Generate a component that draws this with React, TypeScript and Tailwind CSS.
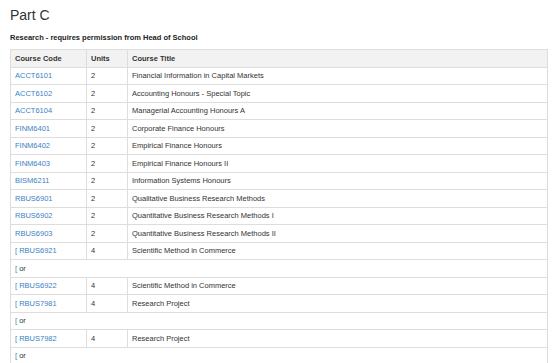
type Course = { code: string; units: number; title: string; bracket?: boolean };

type Row = Course | "or";

const rows: Row[] = [
  { code: "ACCT6101", units: 2, title: "Financial Information in Capital Markets" },
  { code: "ACCT6102", units: 2, title: "Accounting Honours - Special Topic" },
  { code: "ACCT6104", units: 2, title: "Managerial Accounting Honours A" },
  { code: "FINM6401", units: 2, title: "Corporate Finance Honours" },
  { code: "FINM6402", units: 2, title: "Empirical Finance Honours" },
  { code: "FINM6403", units: 2, title: "Empirical Finance Honours II" },
  { code: "BISM6211", units: 2, title: "Information Systems Honours" },
  { code: "RBUS6901", units: 2, title: "Qualitative Business Research Methods" },
  { code: "RBUS6902", units: 2, title: "Quantitative Business Research Methods I" },
  { code: "RBUS6903", units: 2, title: "Quantitative Business Research Methods II" },
  { code: "RBUS6921", units: 4, title: "Scientific Method in Commerce", bracket: true },
  "or",
  { code: "RBUS6922", units: 4, title: "Scientific Method in Commerce", bracket: true },
  { code: "RBUS7981", units: 4, title: "Research Project", bracket: true },
  "or",
  { code: "RBUS7982", units: 4, title: "Research Project", bracket: true },
  "or",
];

export default function App() {
  return (
    <div className="min-h-screen bg-white px-[10px] text-[#333] [font-family:'Liberation_Sans',Arial,sans-serif]">
      <h2 className="mt-[8px] text-[14px] leading-[15px]">Part C</h2>
      <p className="mt-[10px] text-[7.5px] font-bold leading-[9px] text-[#222]">
        Research - requires permission from Head of School
      </p>

      <table className="mt-[7px] w-[538px] table-fixed border-collapse text-[7.5px]">
        <colgroup>
          <col className="w-[76px]" />
          <col className="w-[41px]" />
          <col />
        </colgroup>
        <thead>
          <tr className="h-[17.5px] bg-[#f2f2f2]">
            <th className="border border-[#ddd] px-[4px] text-left font-bold">Course Code</th>
            <th className="border border-[#ddd] px-[4px] text-left font-bold">Units</th>
            <th className="border border-[#ddd] px-[4px] text-left font-bold">Course Title</th>
          </tr>
        </thead>
        <tbody>
          {rows.map((r, i) =>
            r === "or" ? (
              <tr key={i} className="h-[17.5px]">
                <td colSpan={3} className="border border-[#ddd] px-[4px]">
                  <span className="text-[#3c7fc4]">[</span> or
                </td>
              </tr>
            ) : (
              <tr key={i} className="h-[17.5px]">
                <td className="border border-[#ddd] px-[4px]">
                  <a className="text-[#3c7fc4]" href="#">
                    {r.bracket ? "[ " : ""}
                    {r.code}
                  </a>
                </td>
                <td className="border border-[#ddd] px-[4px]">{r.units}</td>
                <td className="border border-[#ddd] px-[4px]">{r.title}</td>
              </tr>
            ),
          )}
        </tbody>
      </table>
    </div>
  );
}
